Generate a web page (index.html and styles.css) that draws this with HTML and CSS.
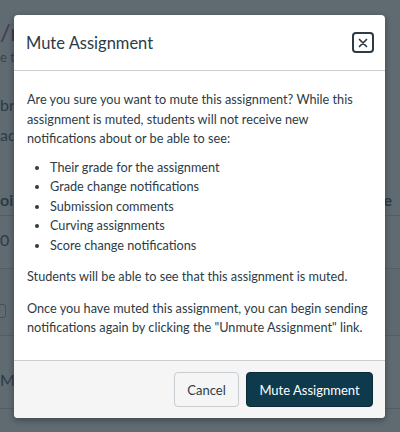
FILE: index.html
```html
<!DOCTYPE html>
<html>
<head>
<meta charset="utf-8">
<link rel="stylesheet" href="styles.css">
</head>
<body>
<div class="page">
  <div class="pg-title">/r</div>
  <div class="pg-sub">e t</div>
  <div class="pg-row r1">br</div>
  <div class="pg-row r2">ad</div>
  <div class="pg-table">
    <div class="pg-th"><span>oi</span><span>e</span></div>
    <div class="pg-td">0</div>
    <div class="pg-td band"><span class="chk"></span></div>
    <div class="pg-td">M</div>
  </div>
</div>
<div class="overlay"></div>
<div class="modal" role="dialog">
  <div class="modal-header">
    <h2 class="modal-title">Mute Assignment</h2>
    <button class="close-btn" aria-label="Close">
      <svg width="10" height="10" viewBox="0 0 10 10"><path d="M1.5 1.5 L8.5 8.5 M8.5 1.5 L1.5 8.5" stroke="#2d3b45" stroke-width="1.7" stroke-linecap="round"/></svg>
    </button>
  </div>
  <div class="modal-body">
    <p class="intro">Are you sure you want to mute this assignment? While this assignment is muted, students will not receive new notifications about or be able to see:</p>
    <ul>
      <li>Their grade for the assignment</li>
      <li>Grade change notifications</li>
      <li>Submission comments</li>
      <li>Curving assignments</li>
      <li>Score change notifications</li>
    </ul>
    <p>Students will be able to see that this assignment is muted.</p>
    <p>Once you have muted this assignment, you can begin sending notifications again by clicking the "Unmute Assignment" link.</p>
  </div>
  <div class="modal-footer">
    <button class="btn btn-cancel">Cancel</button>
    <button class="btn btn-primary">Mute Assignment</button>
  </div>
</div>
</body>
</html>
```

FILE: styles.css
```css
* { box-sizing: border-box; }
html, body { margin: 0; padding: 0; }
body {
  width: 400px;
  height: 432px;
  overflow: hidden;
  font-family: Lato, "Open Sans", sans-serif;
  color: #2d3b45;
  background: #fff;
  position: relative;
}
.page {
  padding-top: 18px;
  white-space: nowrap;
}
.pg-title { font-size: 24px; color: #8a3f6e; line-height: 28px; }
.pg-sub { font-size: 13px; color: #8a3f6e; line-height: 16px; margin-top: 3px; }
.pg-row { font-size: 16px; line-height: 20px; }
.pg-row.r1 { margin-top: 30px; }
.pg-row.r2 { margin-top: 10px; }
.pg-table { margin-top: 45px; }
.pg-th {
  display: flex; justify-content: space-between;
  font-size: 16px; font-weight: 700; line-height: 20px;
  padding: 0 8px 5px 0;
  border-bottom: 1px solid #c7cdd1;
}
.pg-td {
  font-size: 16px; line-height: 20px; padding: 14px 0 18px 0;
  border-bottom: 1px solid #c7cdd1;
}
.pg-td.band { background: #f5f5f5; height: 67px; padding-top: 35px; }
.chk { display: block; width: 14px; height: 14px; border: 1px solid #8b969e; border-radius: 3px; margin-left: -8px; background: #fff; }
.pg-td.band + .pg-td { padding-top: 34px; }
.overlay {
  position: absolute; inset: 0;
  background: rgba(45, 59, 69, 0.76);
}
.modal {
  position: absolute;
  left: 14px; top: 15px;
  width: 371px; height: 403px;
  background: #fff;
  border-radius: 4px;
  box-shadow: 0 2px 6px rgba(0,0,0,0.35);
  display: flex; flex-direction: column;
  overflow: hidden;
}
.modal-header {
  height: 56px;
  border-bottom: 1px solid #c7cdd1;
  display: flex; align-items: center; justify-content: space-between;
  padding: 0 11px 0 12px;
  flex: none;
}
.modal-title {
  margin: 0; font-size: 16.5px; font-weight: 400; line-height: 22px; color: #2d3b45;
}
.close-btn {
  width: 22px; height: 21px; padding: 0;
  border: 2px solid #2d3b45; border-radius: 4px;
  background: #fff;
  display: flex; align-items: center; justify-content: center;
}
.modal-body {
  flex: 1;
  padding: 19px 8px 0 13px;
  font-size: 12.7px; line-height: 19.5px;
}
.modal-body p { margin: 0 0 12px 0; }
.modal-body p.intro { margin-bottom: 9px; }
.modal-body ul { margin: 0 0 12px 0; padding-left: 23px; }
.modal-footer {
  flex: none;
  height: 58px;
  background: #f5f5f5;
  border-top: 1px solid #c7cdd1;
  display: flex; justify-content: flex-end; align-items: center; gap: 7px;
  padding: 0 12px 0 0;
}
.btn {
  font-family: Lato, "Open Sans", sans-serif;
  font-size: 13px; height: 35px; border-radius: 4px; padding: 0;
}
.btn-cancel { background: #f5f5f5; border: 1px solid #c7cdd1; color: #2d3b45; width: 65px; }
.btn-primary { background: #0e3a4c; border: 1px solid #0a2a37; color: #fff; width: 127px; }
```
